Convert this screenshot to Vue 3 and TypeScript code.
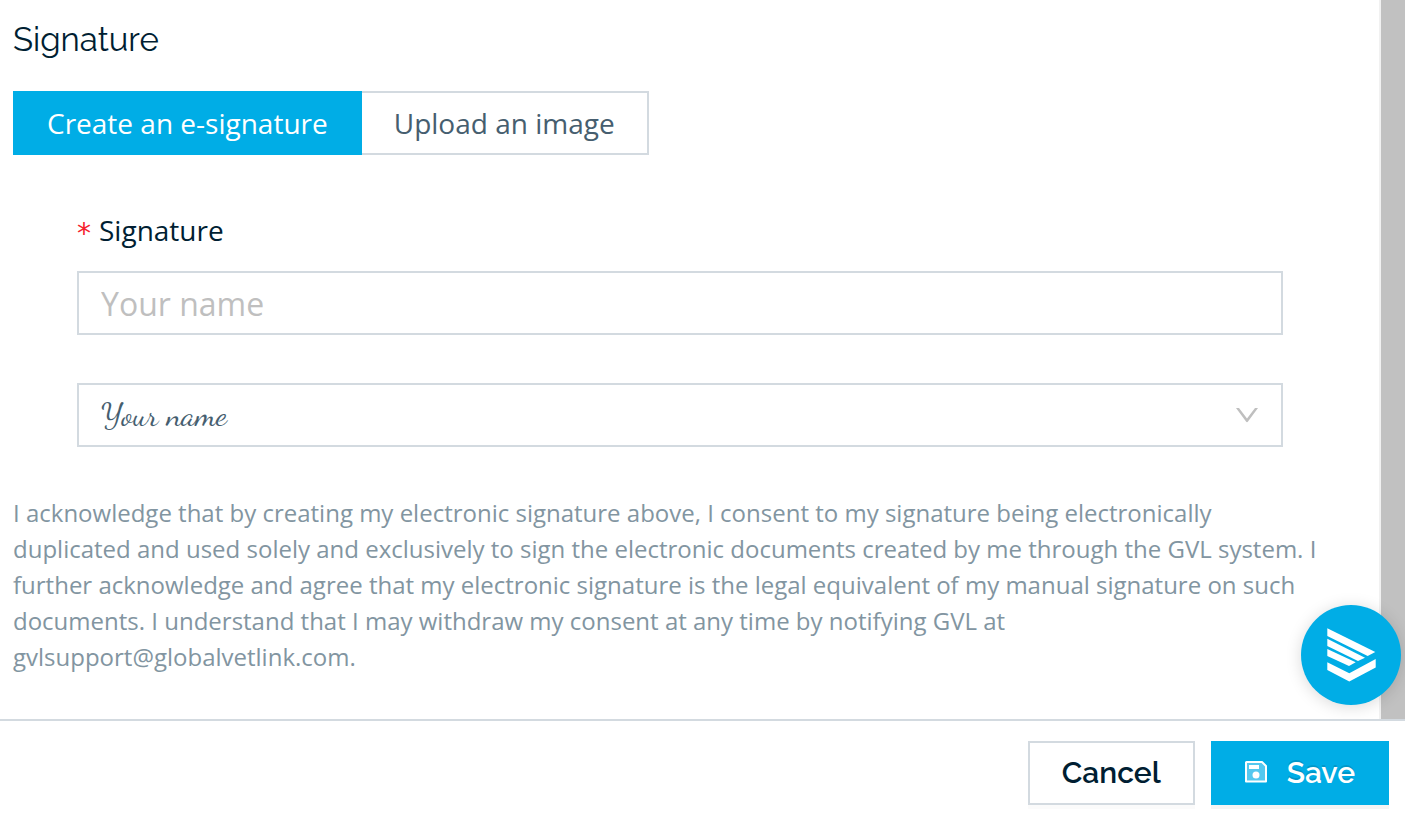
<script setup lang="ts">
import { ref } from 'vue'

type Mode = 'create' | 'upload'

const modes: { value: Mode; label: string }[] = [
  { value: 'create', label: 'Create an e-signature' },
  { value: 'upload', label: 'Upload an image' },
]

const mode = ref<Mode>('create')
const signature = ref('')
const style = ref('script')
</script>

<template>
  <div class="dialog">
    <div class="body">
      <main class="content">
        <h2 class="title">Signature</h2>

        <div class="modes" role="radiogroup" aria-label="Signature type">
          <label v-for="m in modes" :key="m.value" class="mode" :class="{ active: mode === m.value }">
            <input v-model="mode" class="mode-input" type="radio" name="mode" :value="m.value" />
            <span>{{ m.label }}</span>
          </label>
        </div>

        <form id="signature-form" class="form" @submit.prevent>
          <label class="label" for="signature"><span class="required">*</span>Signature</label>
          <input id="signature" v-model="signature" class="field" type="text" placeholder="Your name" />
          <div class="select-wrap">
            <select v-model="style" class="field select" aria-label="Signature style">
              <option value="script">{{ signature || 'Your name' }}</option>
            </select>
            <svg class="chevron" viewBox="0 0 22 16" aria-hidden="true">
              <path d="M0 1H3L11 11.5L19 1H22L12 14.5Q11 15.8 10 14.5Z" />
            </svg>
          </div>
        </form>

        <p class="consent">
          I acknowledge that by creating my electronic signature above, I consent to my signature being
          electronically duplicated and used solely and exclusively to sign the electronic documents created by me
          through the GVL system. I further acknowledge and agree that my electronic signature is the legal
          equivalent of my manual signature on such documents. I understand that I may withdraw my consent at any
          time by notifying GVL at gvlsupport@globalvetlink.com.
        </p>
      </main>
      <div class="scrollbar" aria-hidden="true"></div>
      <button class="help" type="button" aria-label="Help">
        <svg viewBox="0 0 100 100" aria-hidden="true">
          <path d="M26.300 23.300L74.300 47L66.700 51L26.300 31Z" />
          <path d="M26.300 33.700L64 52.700L57 56L26.300 41Z" />
          <path d="M26.300 44L54.700 57.300L48 61L26.300 51Z" />
          <path d="M26.300 57.300L48.300 68.300L74.700 54V62.500L48.300 76.400L26.300 65Z" />
        </svg>
      </button>
    </div>

    <footer class="footer">
      <button class="button" type="button">Cancel</button>
      <button class="button primary" type="submit" form="signature-form">
        <svg class="save-icon" viewBox="0 0 22 22" aria-hidden="true">
          <path class="disk" d="M1.500 1H17L21 5V20.500H1V1.500Z" />
          <path class="solid" d="M4 4H14V8H4Z" />
          <circle class="solid" cx="11" cy="14" r="3.500" />
        </svg>
        <span>Save</span>
      </button>
    </footer>
  </div>
</template>

<style>
body {
  margin: 0;
  background: #fff;
}
</style>

<style scoped>
* {
  box-sizing: border-box;
}

.dialog {
  display: flex;
  flex-direction: column;
  min-height: 100vh;
  color: #001e32;
  font-family: "Open Sans", "Noto Sans", sans-serif;
}

.body {
  position: relative;
  display: flex;
  flex: 1;
}

.content {
  flex: 1;
  min-width: 0;
  padding: 16px 32px 0 13px;
}

.title {
  margin: 0 0 27px;
  font-family: Raleway, Lato, sans-serif;
  font-size: 33px;
  font-weight: 400;
  line-height: 48px;
}

.modes {
  display: flex;
}

.mode {
  position: relative;
  display: flex;
  align-items: center;
  height: 64px;
  padding: 0 32px;
  border: 2px solid #d3dae0;
  color: #465e6f;
  font-size: 28px;
  line-height: 40px;
  cursor: pointer;
}

.mode + .mode {
  border-left: 0;
}

.mode.active {
  border-color: #00ade6;
  background: #00ade6;
  color: #fff;
}

.mode-input {
  position: absolute;
  width: 1px;
  height: 1px;
  margin: 0;
  opacity: 0;
}

.form {
  display: flex;
  flex-direction: column;
  padding: 55px 64px 0;
}

.label {
  display: flex;
  align-items: center;
  gap: 8px;
  margin-bottom: 21px;
  font-size: 28px;
  line-height: 40px;
}

.required {
  padding-top: 8px;
  color: #f5222d;
  font-family: "DejaVu Sans", sans-serif;
  line-height: 28px;
}

.field {
  width: 100%;
  height: 64px;
  padding: 0 22px;
  border: 2px solid #d3dae0;
  border-radius: 0;
  outline: 0;
  background: #fff;
  color: #465e6f;
  font-family: inherit;
  font-size: 32px;
}

.field::placeholder {
  color: #bfbfbf;
  opacity: 1;
}

.select-wrap {
  position: relative;
  margin-top: 48px;
}

.select {
  display: block;
  appearance: none;
  font-family: "Dancing Script", cursive;
  font-size: 32px;
}

.chevron {
  position: absolute;
  top: 24px;
  right: 25px;
  width: 22px;
  height: 16px;
  fill: #bfbfbf;
  pointer-events: none;
}

.consent {
  margin: 48px 16px 0 0;
  color: #8295a1;
  font-size: 24px;
  line-height: 36px;
}

.scrollbar {
  width: 26px;
  border-left: 2px solid #f1f1f1;
  background: #c1c1c1;
}

.help {
  position: absolute;
  right: 4px;
  bottom: 14px;
  width: 100px;
  height: 100px;
  padding: 0;
  border: 0;
  border-radius: 50%;
  background: #00ade6;
  box-shadow: 0 2px 16px rgba(0, 0, 0, 0.15);
  cursor: pointer;
}

.help svg {
  display: block;
  fill: #fff;
}

.footer {
  position: relative;
  display: flex;
  justify-content: flex-end;
  gap: 16px;
  padding: 20px 16px 12px;
  border-top: 2px solid #d3dae0;
  background: #fff;
}

.button {
  display: flex;
  align-items: center;
  gap: 20px;
  height: 64px;
  padding: 0 32px;
  border: 2px solid #d3dae0;
  background: #fff;
  box-shadow: 0 4px 0 rgba(0, 0, 0, 0.016);
  color: #001e32;
  font-family: Raleway, Lato, sans-serif;
  font-size: 30px;
  font-weight: 600;
  line-height: 40px;
  cursor: pointer;
}

.primary {
  border-color: #00ade6;
  background: #00ade6;
  box-shadow: 0 4px 0 rgba(0, 0, 0, 0.043);
  color: #fff;
  text-shadow: 0 -2px 0 rgba(0, 0, 0, 0.12);
}

.save-icon {
  width: 22px;
  height: 22px;
  margin-bottom: 2px;
}

.disk {
  fill: #54c8ef;
  stroke: #fff;
  stroke-width: 2;
  stroke-linejoin: round;
}

.solid {
  fill: #fff;
}
</style>
